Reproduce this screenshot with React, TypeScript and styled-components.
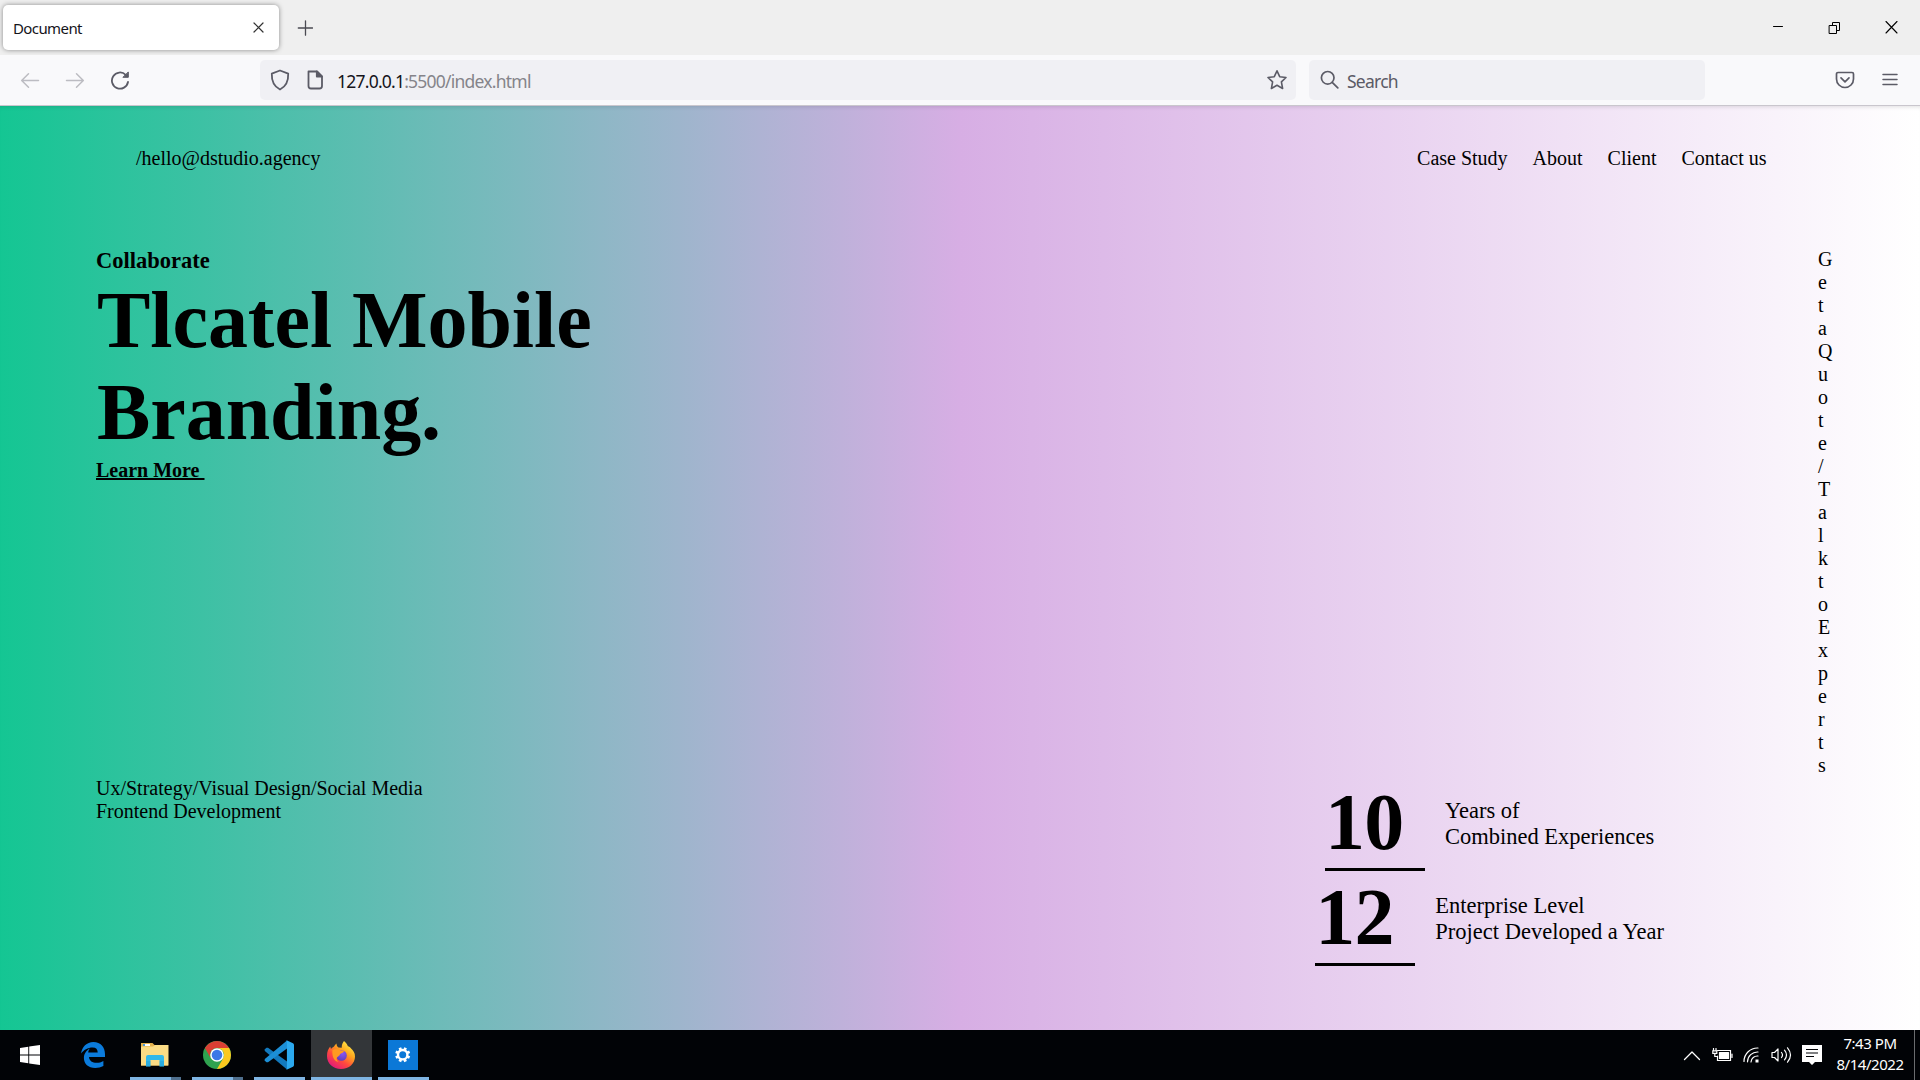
import React from "react";
import styled, { createGlobalStyle } from "styled-components";

const GlobalStyle = createGlobalStyle`
  * { box-sizing: border-box; }
  body { margin: 0; overflow: hidden; }
  svg { display: block; flex: none; }
`;

const ui = `"Noto Sans", "Open Sans", sans-serif`;
const serif = `"Liberation Serif", "Times New Roman", serif`;

const Screen = styled.div`
  width: 1920px;
  height: 1080px;
  display: flex;
  flex-direction: column;
`;

/* ---------- browser window ---------- */

const TabStrip = styled.div`
  height: 55px;
  flex: none;
  display: flex;
  align-items: center;
  padding: 0 21px 0 3px;
  background: #efefef;
`;

const Tab = styled.div`
  width: 276px;
  height: 45px;
  display: flex;
  align-items: center;
  justify-content: space-between;
  padding: 0 15px 0 10px;
  border-radius: 5px;
  background: #fff;
  box-shadow: 0 0 5px rgba(0, 0, 0, 0.42);
`;

const TabTitle = styled.span`
  font: 15px/20px ${ui};
  letter-spacing: -0.6px;
  color: #15141a;
  padding-top: 1px;
`;

const NewTab = styled.div`
  margin-left: 18px;
`;

const WindowControls = styled.div`
  margin-left: auto;
  display: flex;
  align-items: center;
  gap: 43px;
`;

const Toolbar = styled.div`
  height: 51px;
  flex: none;
  display: flex;
  align-items: center;
  padding: 0 22px 1px 20px;
  background: #f9f9fb;
  border-bottom: 1px solid #c9c6cd;
`;

const NavButtons = styled.div`
  width: 240px;
  display: flex;
  align-items: center;
  gap: 25px;
`;

const Field = styled.div<{ $width: number }>`
  width: ${(p) => p.$width}px;
  height: 40px;
  display: flex;
  align-items: center;
  padding: 0 8px 0 10px;
  border-radius: 5px;
  background: #f0f0f4;
`;

const FieldGap = styled.div`
  width: 13px;
`;

const UrlText = styled.span`
  margin-left: 12px;
  flex: 1;
  font: 17.5px/24px ${ui};
  letter-spacing: -0.77px;
  color: #15141a;
  padding-top: 3px;
`;

const UrlPath = styled.span`
  color: #85848a;
`;

const SearchText = styled.span`
  margin-left: 8px;
  font: 17.5px/24px ${ui};
  letter-spacing: -0.75px;
  color: #5b5b66;
  padding-top: 3px;
`;

const ToolbarEnd = styled.div`
  margin-left: auto;
  display: flex;
  align-items: center;
  gap: 27px;
`;

/* ---------- web page ---------- */

const Page = styled.main`
  height: 924px;
  flex: none;
  display: flex;
  flex-direction: column;
  background: linear-gradient(to right, rgb(20, 198, 147), rgb(215, 174, 228) 50%, #fff);
  box-shadow: inset 0 4px 4px -3px rgba(0, 0, 0, 0.12);
  font: 20px/23px ${serif};
  color: #000;
`;

const Header = styled.header`
  display: flex;
  justify-content: space-between;
  padding: 41px 153.5px 0 136px;
  height: 140px;
`;

const Menu = styled.nav`
  display: flex;
  gap: 25px;
`;

const Hero = styled.section`
  display: flex;
  justify-content: space-between;
  height: 530px;
  padding: 0 87px 0 96px;
`;

const Intro = styled.div`
  display: flex;
  flex-direction: column;
  align-items: flex-start;
  padding-top: 2px;
`;

const Kicker = styled.h3`
  margin: 0;
  font-size: 22.5px;
  line-height: 26px;
`;

const Title = styled.h1`
  margin: 0 0 0 1px;
  font-size: 80px;
  line-height: 92px;
  letter-spacing: -0.06px;
`;

const Learn = styled.a`
  margin-top: 1px;
  font-weight: 700;
  white-space: pre;
  text-decoration: underline;
  text-decoration-thickness: 2px;
  text-underline-offset: 1px;
`;

const Vertical = styled.div`
  width: 15px;
  padding-top: 2px;
  display: flex;
  flex-direction: column;
`;

const Bottom = styled.section`
  display: flex;
  justify-content: space-between;
  padding: 0 256px 0 96px;
`;

const Services = styled.div`
  padding-top: 1px;
`;

const Stats = styled.div`
  display: flex;
  flex-direction: column;
  align-items: center;
`;

const Stat = styled.div`
  display: flex;
  align-items: center;
  gap: 20px;
`;

const Figure = styled.div`
  width: 100px;
  border-bottom: 3px solid #000;
  font-weight: 700;
  font-size: 80px;
  line-height: 92px;
  letter-spacing: -0.8px;
`;

const StatLabel = styled.div`
  font-size: 22.5px;
  line-height: 26px;
`;

/* ---------- taskbar ---------- */

const Taskbar = styled.footer`
  height: 50px;
  flex: none;
  display: flex;
  justify-content: space-between;
  background: #010306;
`;

const Apps = styled.div`
  display: flex;
`;

const AppButton = styled.div<{ $active?: boolean; $first?: boolean }>`
  width: ${(p) => (p.$first ? 63 : 62)}px;
  height: 50px;
  display: flex;
  flex-direction: column;
  align-items: center;
  justify-content: space-between;
  border-right: 1px solid #010306;
  background: ${(p) => (p.$active ? "#333639" : "transparent")};
`;

const IconBox = styled.div`
  height: 47px;
  display: flex;
  align-items: center;
  padding: 3px 2px 0 0;
`;

const Indicator = styled.div<{ $wide?: boolean; $stacked?: boolean; $hidden?: boolean }>`
  width: ${(p) => (p.$wide ? 61 : 51)}px;
  height: 3px;
  visibility: ${(p) => (p.$hidden ? "hidden" : "visible")};
  background: ${(p) =>
    p.$stacked ? "linear-gradient(to right, #7fb5e3 41px, #4f6f8d 41px)" : "#7fb5e3"};
`;

const Tray = styled.div`
  display: flex;
  align-items: center;
  color: #fff;
`;

const TrayIcons = styled.div`
  display: flex;
  align-items: center;
  gap: 10.5px;
`;

const Clock = styled.div`
  width: 92px;
  height: 50px;
  padding: 3px 0 0 4px;
  text-align: center;
  font: 15px/21px ${ui};
  letter-spacing: -0.45px;
`;

const ShowDesktop = styled.div`
  width: 6px;
  height: 50px;
  border-left: 1px solid #6a6c6e;
`;

const Stroke = ({ w, h = w, color = "#5b5b66", sw = 1.6, children }: any) => (
  <svg width={w} height={h} viewBox={`0 0 ${w} ${h}`} fill="none" stroke={color} strokeWidth={sw} strokeLinecap="round" strokeLinejoin="round">
    {children}
  </svg>
);

const StartIcon = () => (
  <svg width="20" height="20" viewBox="0 0 20 20" fill="#fff">
    <path d="M0 3 8.3 1.8V9.5H0zM9.2 1.6 20 0v9.5H9.2zM0 10.4h8.3v7.8L0 17zM9.2 10.4H20V20L9.2 18.4z" />
  </svg>
);

const EdgeIcon = () => (
  <svg width="24" height="26" viewBox="0 0 24 26">
    <path fill="#0b7bdb" d="M0 11.5C1 5 5.6 0 12.4 0 19.8 0 24 5.4 24 12v3H8c.2 4 3.6 5.8 7.4 5.8 2.7 0 5-.7 7-1.900v5.200C20 25.400 17.300 26 14.300 26 7.200 26 2.900 21.800 2.900 16c0-4.300 2.300-7.600 6-9.600-1.100 1.200-1.600 2.700-1.700 4.200H16.700c0-3.300-1.700-5.200-5-5.200C6.800 5.400 2.600 7.900 0 11.500z" />
  </svg>
);

const ExplorerIcon = () => (
  <svg width="28" height="24" viewBox="0 0 28 24">
    <path fill="#e3b24d" d="M0 0h11.500l2 2H27v20.500H0z" />
    <path fill="#fff" d="M2 1h7v2H2z" />
    <path fill="#4a9ad4" d="M2 1h2v2H2z" />
    <path fill="#fbdc85" d="M0 3.500h12l2-1.500h13.500v20.500H0z" />
    <path fill="#31b8ea" d="M7 12h14a2 2 0 0 1 2 2v9.500h-4.500V17h-9v6.500H5V14a2 2 0 0 1 2-2z" />
    <path fill="#1c93c9" d="M5 18h4.500v5.500H5zM18.500 18H23v5.500h-4.500z" opacity=".3" />
  </svg>
);

const ChromeIcon = () => (
  <svg width="28" height="28" viewBox="0 0 28 28">
    <circle cx="14" cy="14" r="14" fill="#2fa24f" />
    <path fill="#d93f34" d="M1.880 7A14 14 0 0 1 26.120 7H14a7 7 0 0 0-6.060 10.500z" />
    <path fill="#fbc91f" d="M26.120 7A14 14 0 0 1 14 28l6.060-10.500A7 7 0 0 0 14 7z" />
    <circle cx="14" cy="14" r="6.800" fill="#fff" />
    <circle cx="14" cy="14" r="5.300" fill="#3b78e7" />
  </svg>
);

const CodeIcon = () => (
  <svg width="30" height="30" viewBox="0 0 30 30">
    <path fill="#1279bd" d="M.5 9.500 2.500 7.800 4 7.700 23 21.500V29.500L.8 11z" />
    <path fill="#1c8fd6" d="M.5 20.500 2.500 22.200 4 22.300 23 8.500V.5L.8 19z" />
    <path fill="#2ba9ee" d="M22 0 29 3.200Q30 3.800 30 5v20q0 1.200-1 1.800L22 30q.9-.4.9-1.500v-27Q22.900.4 22 0z" />
  </svg>
);

const FirefoxIcon = () => (
  <svg width="28" height="28" viewBox="0 0 28 28">
    <defs>
      <linearGradient id="fox" x1=".85" y1=".05" x2=".2" y2=".95">
        <stop offset="0" stopColor="#fff04a" />
        <stop offset=".35" stopColor="#ffa61e" />
        <stop offset=".65" stopColor="#ff4a3d" />
        <stop offset="1" stopColor="#e3187c" />
      </linearGradient>
      <radialGradient id="globe" cx=".6" cy=".3" r=".8">
        <stop offset="0" stopColor="#8a56f5" />
        <stop offset="1" stopColor="#5a3bb5" />
      </radialGradient>
    </defs>
    <path fill="url(#fox)" d="M17 0c2.500 2 3.200 3.500 3.900 5.200 1.400.6 2 .5 2.700 1.800C26.500 9.500 28 12 28 15.500 28 22.500 22 28 14 28S0 22.500 0 15C0 11 1.200 8 3.200 5.600L4 8c1.200-1.300 2-1.900 3-2.400C7.500 4.500 8.300 3.300 9.500 2.500c0 2 .8 3 2 4l3.200.2C14.700 4 15.500 1.800 17 0z" />
    <circle cx="14.500" cy="14.500" r="5.300" fill="url(#globe)" />
    <path fill="#ff9a20" d="M5.500 9c3-1.700 6-.8 8.200.5 1.300.2 2.300 0 3.300.4-.5 1.900-3.200 2-4 3.400-.3 1.500-2 2-3.200 3.500-.5 1.500.2 3 1.700 4.100C7 20.500 4.600 15 5.500 9z" />
  </svg>
);

const SettingsIcon = () => (
  <svg width="30" height="30" viewBox="0 0 30 30">
    <path fill="#0b78d7" d="M0 0h30v30H0z" />
    <circle cx="14.700" cy="14.700" r="4.700" fill="none" stroke="#fff" strokeWidth="2.400" />
    {[0, 45, 90, 135, 180, 225, 270, 315].map((a) => (
      <path key={a} fill="#fff" d="M13.300 7.200h2.800v3h-2.800z" transform={`rotate(${a + 22.5} 14.7 14.7)`} />
    ))}
  </svg>
);

const apps = [
  { icon: <StartIcon />, hidden: true },
  { icon: <EdgeIcon />, hidden: true },
  { icon: <ExplorerIcon />, stacked: true },
  { icon: <ChromeIcon />, stacked: true },
  { icon: <CodeIcon /> },
  { icon: <FirefoxIcon />, active: true },
  { icon: <SettingsIcon /> },
];

const stats = [
  { figure: "10", lines: ["Years of", "Combined Experiences"] },
  { figure: "12", lines: ["Enterprise Level", "Project Developed a Year"] },
];

export default function App() {
  return (
    <Screen>
      <GlobalStyle />
      <TabStrip>
        <Tab>
          <TabTitle>Document</TabTitle>
          <Stroke w={11} color="#333" sw={1.2}>
            <path d="M1 1l9 9M10 1l-9 9" />
          </Stroke>
        </Tab>
        <NewTab>
          <Stroke w={16} color="#4a4a52" sw={1.3}>
            <path d="M8.500 .8v14.400M1.300 8h14.400" />
          </Stroke>
        </NewTab>
        <WindowControls>
          <Stroke w={12} h={14} color="#000" sw={1}>
            <path d="M1.500 5.500h9" />
          </Stroke>
          <Stroke w={14} color="#000" sw={1}>
            <path strokeLinejoin="miter" d="M2.500 4.500h7v8h-7zM5.500 4V1.500h7v8H10" />
          </Stroke>
          <Stroke w={15} color="#000" sw={1.1}>
            <path d="M2 1.500l11 11.500M13 1.500l-11 11.500" />
          </Stroke>
        </WindowControls>
      </TabStrip>

      <Toolbar>
        <NavButtons>
          <Stroke w={20} color="#bcbcc2" sw={1.5}>
            <path d="M18.500 10.500H2M8.500 3.700 1.700 10.500l6.800 6.800" />
          </Stroke>
          <Stroke w={20} color="#bcbcc2" sw={1.5}>
            <path d="M1.500 10.500H18M11.500 3.700 18.300 10.500l-6.800 6.800" />
          </Stroke>
          <Stroke w={20} sw={1.8}>
            <path d="M18 12A8.100 8.100 0 1 1 15.700 4.800" />
            <path d="M18.300 2.300v5h-5z" fill="#5b5b66" strokeWidth="1" />
          </Stroke>
        </NavButtons>
        <Field $width={1036}>
          <Stroke w={20} h={22} sw={1.8}>
            <path d="M10 1.500 18.200 4.600C18.500 12 16 17.500 10 20.500 4 17.500 1.500 12 1.800 4.600z" />
          </Stroke>
          <Stroke w={35} h={20} sw={1.8}>
            <path d="M20 1.500h8.500l5 5V16a2.500 2.500 0 0 1-2.500 2.500H22.500A2.500 2.500 0 0 1 20 16z" transform="translate(-1.500 0)" />
            <path d="M26.800 1.500v5h5z" fill="#5b5b66" />
          </Stroke>
          <UrlText>
            127.0.0.1<UrlPath>:5500/index.html</UrlPath>
          </UrlText>
          <Stroke w={22} sw={1.6}>
            <path d="M11 1.800l2.700 5.900 6.300.8-4.600 4.400 1.200 6.600L11 16.300l-5.600 3.200 1.200-6.600L2 8.500l6.300-.8z" />
          </Stroke>
        </Field>
        <FieldGap />
        <Field $width={396}>
          <Stroke w={20} sw={1.7}>
            <circle cx="8.700" cy="7.800" r="6.300" />
            <path d="M13.200 12.300l5.600 5.600" />
          </Stroke>
          <SearchText>Search</SearchText>
        </Field>
        <ToolbarEnd>
          <Stroke w={20} sw={1.7}>
            <path d="M3 2.500h14a1.500 1.500 0 0 1 1.500 1.500v5a8.500 8.500 0 0 1-17 0V4A1.500 1.500 0 0 1 3 2.500zM6 7.800l4 4 4-4" />
          </Stroke>
          <Stroke w={16} sw={1.5}>
            <path d="M1 2.500h14M1 7.500h14M1 12.500h14" />
          </Stroke>
        </ToolbarEnd>
      </Toolbar>

      <Page>
        <Header>
          <span>/hello@dstudio.agency</span>
          <Menu>
            {["Case Study", "About", "Client", "Contact us"].map((t) => (
              <span key={t}>{t}</span>
            ))}
          </Menu>
        </Header>
        <Hero>
          <Intro>
            <Kicker>Collaborate</Kicker>
            <Title>
              Tlcatel Mobile
              <br />
              Branding.
            </Title>
            <Learn>{"Learn More "}</Learn>
          </Intro>
          <Vertical>
            {"GetaQuote/TalktoExperts".split("").map((c, i) => (
              <span key={i}>{c}</span>
            ))}
          </Vertical>
        </Hero>
        <Bottom>
          <Services>
            Ux/Strategy/Visual Design/Social Media
            <br />
            Frontend Development
          </Services>
          <Stats>
            {stats.map((s) => (
              <Stat key={s.figure}>
                <Figure>{s.figure}</Figure>
                <StatLabel>
                  {s.lines[0]}
                  <br />
                  {s.lines[1]}
                </StatLabel>
              </Stat>
            ))}
          </Stats>
        </Bottom>
      </Page>

      <Taskbar>
        <Apps>
          {apps.map((a, i) => (
            <AppButton key={i} $active={a.active} $first={i === 0}>
              <IconBox>{a.icon}</IconBox>
              <Indicator $wide={a.active} $stacked={a.stacked} $hidden={a.hidden} />
            </AppButton>
          ))}
        </Apps>
        <Tray>
          <TrayIcons>
            <Stroke w={18} h={11} color="#fff" sw={1.3}>
              <path d="M1.500 9.500 9 2l7.500 7.500" />
            </Stroke>
            <Stroke w={21} h={14} color="#fff" sw={1.2}>
              <path strokeLinejoin="miter" d="M5.500 2.500h13v10h-13V8M20 6v3.500M1.500 .5v2M4 .5v2M.8 2.800h4v2.500h-4zM2.800 5.500v3h2.500" />
              <path d="M7.500 4.500h9v6h-9z" fill="#fff" />
            </Stroke>
            <Stroke w={17} h={16} color="#fff" sw={1.2}>
              <path d="M1 14.500A13.500 13.500 0 0 1 15 1M4.500 14.800A10 10 0 0 1 15 5M8 15a6.500 6.500 0 0 1 7-6" />
              <path d="M12.500 12.500h3v3h-3z" fill="#fff" stroke="none" />
            </Stroke>
            <Stroke w={21} h={18} color="#fff" sw={1.2}>
              <path d="M1 6.500h2.500L7 3v12l-3.500-3.500H1zM10.500 6.500q2 2.500 0 5M13.500 4.200q4 4.800 0 9.600M16.500 1.800q6 7.200 0 14.400" />
            </Stroke>
            <svg width="20" height="20" viewBox="0 0 20 20">
              <path fill="#fff" d="M0 0h20v17h-7l-3 3-3-3H0z" />
              <path stroke="#010306" strokeWidth="1.200" d="M4 4.500h12M4 8h12M4 11.500h8" />
            </svg>
          </TrayIcons>
          <Clock>
            7:43 PM
            <br />
            8/14/2022
          </Clock>
          <ShowDesktop />
        </Tray>
      </Taskbar>
    </Screen>
  );
}
